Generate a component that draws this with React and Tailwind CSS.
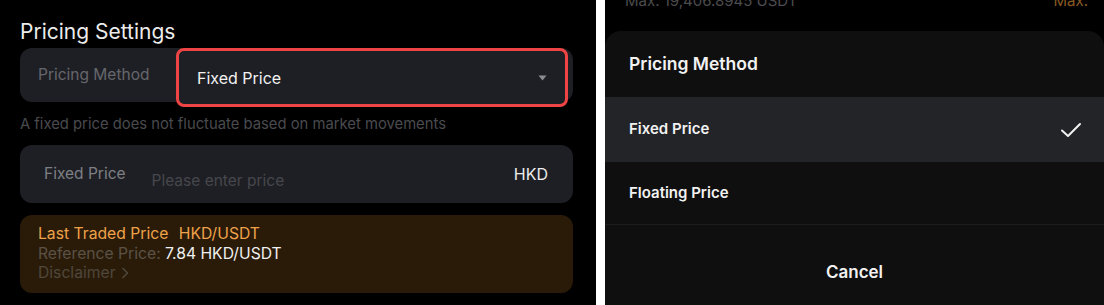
import React from 'react';

const font = { fontFamily: 'Inter, "Noto Sans", sans-serif' };

function Caret() {
  return (
    <svg width="9" height="6" viewBox="0 0 9 6" className="shrink-0">
      <path d="M0.5 0.5h8L4.5 5.5z" fill="#8b8c90" />
    </svg>
  );
}

function Chevron() {
  return (
    <svg width="8" height="12" viewBox="0 0 8 12" className="ml-[5px] shrink-0">
      <path d="M2 1.5l4.5 4.5L2 10.5" fill="none" stroke="#4f473c" strokeWidth="1.6" strokeLinecap="round" strokeLinejoin="round" />
    </svg>
  );
}

function Check() {
  return (
    <svg width="22" height="16" viewBox="0 0 22 16">
      <path d="M2 8.5l6 5.5L20 2" fill="none" stroke="#f2f2f2" strokeWidth="2" strokeLinecap="round" strokeLinejoin="round" />
    </svg>
  );
}

function PricingSettings() {
  return (
    <div className="w-[596px] h-full bg-black pl-5 pr-[23px] flex flex-col">
      <div className="mt-[18px] h-[28px] leading-[28px] text-[21px] text-[#ececec]">Pricing Settings</div>

      <div className="relative mt-[2px] h-[54px] rounded-[12px] bg-[#1e1f24] flex items-center">
        <span className="pl-[18px] text-[15.5px] text-[#66676c]">Pricing Method</span>
        {/* highlighted selector */}
        <div className="absolute left-[156px] right-[5px] top-0 bottom-[-5px] rounded-[8px] border-[3px] border-[#ef4444] bg-[#1e1f24] flex items-center justify-between pl-[18px] pr-[18px]">
          <span className="text-[16px] text-[#f2f2f2]">Fixed Price</span>
          <Caret />
        </div>
      </div>

      <div className="mt-[12px] h-[20px] leading-[20px] text-[14.8px] text-[#4a4b4f]">
        A fixed price does not fluctuate based on market movements
      </div>

      <div className="mt-[11px] h-[58px] rounded-[12px] bg-[#1e1f24] flex items-center pl-[24px] pr-[25px]">
        <span className="text-[15.5px] text-[#7f8085]">Fixed Price</span>
        <span className="ml-[26px] mt-[14px] flex-1 text-[15.5px] text-[#46474c]">Please enter price</span>
        <span className="text-[16px] text-[#ececec]">HKD</span>
      </div>

      <div className="mt-[12px] h-[78px] rounded-[12px] bg-[#2a1b09] pl-[18px] pt-[9px] text-[15.7px]">
        <div className="h-[20px] leading-[20px] text-[#efa24a]">
          Last Traded Price <span className="ml-[6px]">HKD/USDT</span>
        </div>
        <div className="h-[19px] leading-[19px]">
          <span className="text-[#5a5246]">Reference Price: </span>
          <span className="text-[#f0f0f0]">7.84 HKD/USDT</span>
        </div>
        <div className="h-[20px] leading-[20px] flex items-center text-[#4f473c]">
          Disclaimer
          <Chevron />
        </div>
      </div>
    </div>
  );
}

function MethodSheet() {
  return (
    <div className="flex-1 h-full bg-black flex flex-col overflow-hidden">
      <div className="-mt-[9px] h-[20px] leading-[20px] flex justify-between pl-[20px] pr-[16px] text-[15px]">
        <span className="text-[#4c4c4e]">Max: 19,406.8945 USDT</span>
        <span className="text-[#8a5a24]">Max.</span>
      </div>
      <div className="mt-[17px] ml-[22px] mr-[14px] h-px bg-[#1b1b1b]" />
      <div className="mt-[3px] flex-1 rounded-t-[16px] bg-[#0f0f0f] flex flex-col">
        <div className="h-[66px] flex items-center pl-[24px] text-[17.5px] font-semibold text-[#f2f2f2]">Pricing Method</div>
        <div className="h-[65px] bg-[#222428] flex items-center justify-between pl-[24px] pr-[22px]">
          <span className="text-[15px] font-semibold text-[#f2f2f2]">Fixed Price</span>
          <Check />
        </div>
        <div className="h-[62px] flex items-center pl-[24px]">
          <span className="text-[15px] font-semibold text-[#f2f2f2]">Floating Price</span>
        </div>
        <div className="h-px bg-[#1c1c1c]" />
        <div className="h-[96px] flex items-center justify-center text-[17px] font-semibold text-[#f2f2f2]">Cancel</div>
      </div>
    </div>
  );
}

export default function App() {
  return (
    <div className="w-[1104px] h-[305px] flex bg-white overflow-hidden" style={font}>
      <PricingSettings />
      <div className="w-[9px] shrink-0 bg-white" />
      <MethodSheet />
    </div>
  );
}
